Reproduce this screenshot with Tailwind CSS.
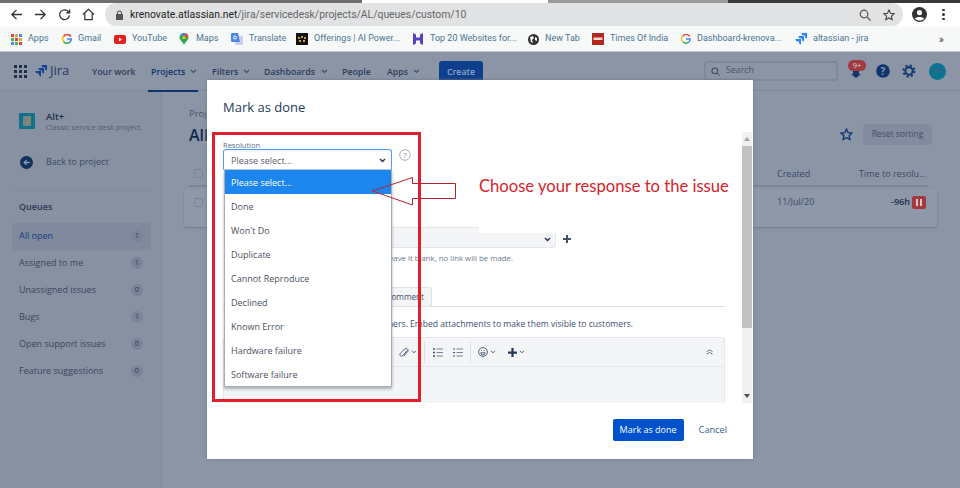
<!DOCTYPE html>
<html lang="en">
<head>
<meta charset="UTF-8">
<title>Mark as done - Jira</title>
<script src="https://cdn.jsdelivr.net/npm/@tailwindcss/browser@4"></script>
</head>
<body class="relative w-[960px] h-[488px] overflow-hidden bg-[#8b95a6] font-['Open_Sans',sans-serif]">

<!-- window strip -->
<div class="flex h-[3px] bg-white">
  <div class="w-[362px] bg-[#6f6f6f]"></div>
  <div class="w-[186px]"></div>
  <div class="w-[180px] bg-[#9a9a9a]"></div>
  <div class="flex-1 bg-[#3a3a3a]"></div>
</div>

<!-- browser toolbar -->
<div class="flex items-center h-[23px] bg-white font-['Roboto',sans-serif]">
  <svg class="ml-[10px] w-[13px] h-[13px]" viewBox="0 0 14 14" fill="none" stroke="#333" stroke-width="1.4"><path d="M13 7H2M7 2L2 7l5 5"/></svg>
  <svg class="ml-[11px] w-[13px] h-[13px]" viewBox="0 0 14 14" fill="none" stroke="#333" stroke-width="1.4"><path d="M1 7h11M7 2l5 5-5 5"/></svg>
  <svg class="ml-[11px] w-[13px] h-[13px]" viewBox="0 0 14 14" fill="none" stroke="#333" stroke-width="1.4"><path d="M11.6 4.5A5.3 5.3 0 1 0 12.3 8M12.5 1.5v3.6H9"/></svg>
  <svg class="ml-[11px] w-[13px] h-[13px]" viewBox="0 0 14 14" fill="none" stroke="#333" stroke-width="1.3"><path d="M1 7l6-5.5L13 7M3 6v6.500h8V6"/></svg>
  <div class="ml-[10px] flex items-center w-[798px] h-[23px] rounded-full bg-[#e1e2e3] pl-[10px] pr-[8px]">
    <svg class="w-[9px] h-[10px]" viewBox="0 0 9 10" fill="#555"><path d="M2 4V3a2.500 2.500 0 0 1 5 0v1h1v6H1V4zm1 0h3V3a1.500 1.500 0 0 0-3 0z"/></svg>
    <span class="ml-[6px] text-[10.400px] whitespace-nowrap text-[#222]">krenovate.atlassian.net<span class="text-[#666]">/jira/servicedesk/projects/AL/queues/custom/10</span></span>
    <svg class="ml-auto w-[12px] h-[12px]" viewBox="0 0 12 12" fill="none" stroke="#555" stroke-width="1.200"><circle cx="5" cy="5" r="3.800"/><path d="M8 8l3.500 3.500"/></svg>
    <svg class="ml-[12px] w-[12px] h-[12px]" viewBox="0 0 12 12" fill="none" stroke="#444" stroke-width="1.100"><path d="M6 1l1.500 3.300 3.600.4-2.700 2.400.8 3.600L6 8.900l-3.200 1.800.8-3.600L.9 4.700l3.600-.4z"/></svg>
  </div>
  <svg class="ml-[9px] w-[15px] h-[15px]" viewBox="0 0 16 16"><circle cx="8" cy="8" r="8" fill="#333"/><circle cx="8" cy="6" r="2.700" fill="#fff"/><path d="M3 12.500c1-2.500 9-2.500 10 0-2 2.500-8 2.500-10 0" fill="#fff"/></svg>
  <div class="ml-[15px] flex flex-col gap-[2px]"><i class="block w-[2.500px] h-[2.500px] rounded-full bg-[#333]"></i><i class="block w-[2.500px] h-[2.500px] rounded-full bg-[#333]"></i><i class="block w-[2.500px] h-[2.500px] rounded-full bg-[#333]"></i></div>
</div>

<!-- bookmarks bar -->
<div class="flex items-center h-[26px] pt-[1px] pl-[11px] bg-[#f7f8f8] border-b border-[#c9cccf] text-[9px] text-[#4a7590] font-['Roboto',sans-serif] whitespace-nowrap">
  <div class="flex items-center w-[51px] shrink-0">
    <svg class="w-[11px] h-[11px]" viewBox="0 0 11 11"><rect width="3" height="3" fill="#d9483b"/><rect x="4" width="3" height="3" fill="#e8a33d"/><rect x="8" width="3" height="3" fill="#4a8af4"/><rect y="4" width="3" height="3" fill="#4caf50"/><rect x="4" y="4" width="3" height="3" fill="#d9483b"/><rect x="8" y="4" width="3" height="3" fill="#e8a33d"/><rect y="8" width="3" height="3" fill="#4a8af4"/><rect x="4" y="8" width="3" height="3" fill="#4caf50"/><rect x="8" y="8" width="3" height="3" fill="#d9483b"/></svg>
    <span class="ml-[6px]">Apps</span>
  </div>
  <div class="flex items-center w-[52px] shrink-0">
    <svg class="w-[10px] h-[10px]" viewBox="0 0 12 12" fill="none" stroke-width="2"><path d="M10.500 3A5 5 0 0 0 2 2.800" stroke="#ea4335"/><path d="M2 2.800a5 5 0 0 0 0 6.400" stroke="#fbbc05"/><path d="M2 9.200a5 5 0 0 0 7.500.4" stroke="#34a853"/><path d="M9.500 9.600A4.500 4.500 0 0 0 11 6H6" stroke="#4285f4"/></svg>
    <span class="ml-[6px]">Gmail</span>
  </div>
  <div class="flex items-center w-[65px] shrink-0">
    <svg class="w-[12px] h-[9px]" viewBox="0 0 12 9"><rect width="12" height="9" rx="2" fill="#e5201d"/><path d="M5 2.500v4L8 4.500z" fill="#fff"/></svg>
    <span class="ml-[6px]">YouTube</span>
  </div>
  <div class="flex items-center w-[52px] shrink-0">
    <svg class="w-[10px] h-[12px]" viewBox="0 0 10 12"><path d="M5 0a4.500 4.500 0 0 1 4.500 4.500C9.500 7 6.500 8.500 5 12 3.500 8.500.5 7 .5 4.500A4.500 4.500 0 0 1 5 0" fill="#34a853"/><path d="M1 3a4.500 4.500 0 0 1 4-3l1 3z" fill="#4285f4"/><path d="M6 0a4.500 4.500 0 0 1 3.400 3.500L6 4.500z" fill="#ea4335"/><circle cx="5" cy="4.500" r="1.600" fill="#fbbc05"/></svg>
    <span class="ml-[7px]">Maps</span>
  </div>
  <div class="flex items-center w-[65px] shrink-0">
    <svg class="w-[12px] h-[12px]" viewBox="0 0 12 12"><rect x="4" y="3" width="8" height="9" rx="1" fill="#c6d3ea"/><path d="M1 0h6l2 9H1a1 1 0 0 1-1-1V1a1 1 0 0 1 1-1" fill="#4a86e8"/><circle cx="4" cy="4.500" r="1.500" fill="none" stroke="#fff"/></svg>
    <span class="ml-[6px]">Translate</span>
  </div>
  <div class="flex items-center w-[116px] shrink-0">
    <svg class="w-[12px] h-[12px]" viewBox="0 0 12 12"><rect width="12" height="12" fill="#111"/><path d="M2 4h2v2H2zm3-1h2v2H5zm3 1h2v2H8zM3 7h2v2H3zm4 0h2v2H7z" fill="#c9a227"/></svg>
    <span class="ml-[6px]">Offerings | AI Power...</span>
  </div>
  <div class="flex items-center w-[116px] shrink-0">
    <svg class="w-[12px] h-[12px]" viewBox="0 0 12 12"><path d="M1 0l3 1.500v9L1 12zm10 0L8 1.500v9l3 1.500zM4 4.500h4v3H4z" fill="#5a3fc0"/></svg>
    <span class="ml-[6px]">Top 20 Websites for...</span>
  </div>
  <div class="flex items-center w-[64px] shrink-0">
    <svg class="w-[11px] h-[11px]" viewBox="0 0 11 11"><circle cx="5.500" cy="5.500" r="5.500" fill="#333"/><path d="M2 3l3-1 1 2-2 2 1 3-2-1zm5 0l2 1v3L7 6z" fill="#f7f8f8"/></svg>
    <span class="ml-[6px]">New Tab</span>
  </div>
  <div class="flex items-center w-[89px] shrink-0">
    <svg class="w-[12px] h-[12px]" viewBox="0 0 12 12"><rect width="12" height="12" fill="#b3261e"/><rect x="1.500" y="4.500" width="9" height="2.500" fill="#f3d6d3"/></svg>
    <span class="ml-[6px]">Times Of India</span>
  </div>
  <div class="flex items-center w-[114px] shrink-0">
    <svg class="w-[10px] h-[10px]" viewBox="0 0 12 12" fill="none" stroke-width="1.600"><path d="M10.500 3A5 5 0 0 0 2 2.800" stroke="#ea4335"/><path d="M2 2.800a5 5 0 0 0 0 6.400" stroke="#fbbc05"/><path d="M2 9.200a5 5 0 0 0 7.500.4" stroke="#34a853"/><path d="M9.500 9.600A4.500 4.500 0 0 0 11 6H6" stroke="#4285f4"/></svg>
    <span class="ml-[6px]">Dashboard-krenova...</span>
  </div>
  <div class="flex items-center w-[144px] shrink-0">
    <svg class="w-[12px] h-[12px]" viewBox="0 0 12 12" fill="#2684ff"><path d="M12 0H6.500a2.500 2.500 0 0 0 2.500 2.500h1v1A2 2 0 0 0 12 5.500zM9 3H3.500a2.500 2.500 0 0 0 2.500 2.500h1v1A2 2 0 0 0 9 8.500zM6 6H.5A2.500 2.500 0 0 0 3 8.500h1v1A2 2 0 0 0 6 11.500z"/></svg>
    <span class="ml-[6px]">altassian - jira</span>
  </div>
  <span class="text-[#333] text-[10px]">»</span>
</div>

<!-- jira nav -->
<div class="flex items-center h-[39px] pl-[14px] text-[8.800px] font-semibold text-[#2c3e5d] border-b border-[#7f899b]">
  <div class="grid grid-cols-3 gap-[2px] w-[13px]">
    <i class="block w-[3px] h-[3px] bg-[#1f2f4d]"></i><i class="block w-[3px] h-[3px] bg-[#1f2f4d]"></i><i class="block w-[3px] h-[3px] bg-[#1f2f4d]"></i>
    <i class="block w-[3px] h-[3px] bg-[#1f2f4d]"></i><i class="block w-[3px] h-[3px] bg-[#1f2f4d]"></i><i class="block w-[3px] h-[3px] bg-[#1f2f4d]"></i>
    <i class="block w-[3px] h-[3px] bg-[#1f2f4d]"></i><i class="block w-[3px] h-[3px] bg-[#1f2f4d]"></i><i class="block w-[3px] h-[3px] bg-[#1f2f4d]"></i>
  </div>
  <svg class="ml-[8px] w-[12px] h-[12px]" viewBox="0 0 12 12" fill="#10438f"><path d="M12 0H6.500a2.500 2.500 0 0 0 2.500 2.500h1v1A2 2 0 0 0 12 5.500zM9 3H3.500a2.500 2.500 0 0 0 2.500 2.500h1v1A2 2 0 0 0 9 8.500zM6 6H.5A2.500 2.500 0 0 0 3 8.500h1v1A2 2 0 0 0 6 11.500z"/></svg>
  <span class="ml-[3px] w-[23px] text-[13px] font-normal text-[#1f3a68]">Jira</span>
  <span class="ml-[19px] w-[59px] pt-[3px]">Your work</span>
  <div class="relative flex items-center justify-between w-[47px] h-[39px] text-[#10346e]">
    <span class="pt-[3px]">Projects</span>
    <svg class="w-[7px] h-[5px] mr-[1px]" viewBox="0 0 7 5" fill="none" stroke="#3e4f6d" stroke-width="1.200"><path d="M1 1l2.500 2.500L6 1"/></svg>
    <div class="absolute left-[-3px] bottom-[-1px] w-[50px] h-[2px] bg-[#10346e]"></div>
  </div>
  <div class="ml-[14px] flex items-center justify-between w-[38px]"><span class="pt-[3px]">Filters</span><svg class="w-[7px] h-[5px]" viewBox="0 0 7 5" fill="none" stroke="#3e4f6d" stroke-width="1.200"><path d="M1 1l2.500 2.500L6 1"/></svg></div>
  <div class="ml-[14px] flex items-center justify-between w-[64px]"><span class="pt-[3px]">Dashboards</span><svg class="w-[7px] h-[5px]" viewBox="0 0 7 5" fill="none" stroke="#3e4f6d" stroke-width="1.200"><path d="M1 1l2.500 2.500L6 1"/></svg></div>
  <span class="ml-[14px] w-[45px] pt-[3px]">People</span>
  <div class="flex items-center justify-between w-[33px]"><span class="pt-[3px]">Apps</span><svg class="w-[7px] h-[5px]" viewBox="0 0 7 5" fill="none" stroke="#3e4f6d" stroke-width="1.200"><path d="M1 1l2.500 2.500L6 1"/></svg></div>
  <div class="ml-[19px] mt-[2px] flex items-center justify-center w-[44px] h-[22px] pt-[1px] rounded-t-[3px] bg-[#0e3f8c] text-[#8fa5c8]">Create</div>
  <div class="ml-[221px] flex items-center w-[134px] h-[20px] rounded-[3px] border-2 border-[#7f899b] bg-[#8b95a6] pl-[5px] font-normal text-[#46546f]">
    <svg class="w-[9px] h-[9px]" viewBox="0 0 10 10" fill="none" stroke="#2c3e5d" stroke-width="1.100"><circle cx="4.300" cy="4.300" r="3.300"/><path d="M7 7l2.500 2.500"/></svg>
    <span class="ml-[6px]">Search</span>
  </div>
  <div class="relative ml-[11px] w-[14px] h-[16px]">
    <svg class="absolute left-[2px] top-[6px] w-[10px] h-[9px]" viewBox="0 0 10 9" fill="#10346e"><path d="M0 5h10L5 9z"/><path d="M2 5V1h6v4z"/></svg>
    <div class="absolute left-[-1px] top-[-3px] flex items-center justify-center w-[18px] h-[11px] rounded-full bg-[#a33a3d] text-[7.500px] font-normal text-[#cfd6e0]">9+</div>
  </div>
  <svg class="ml-[13px] w-[14px] h-[14px]" viewBox="0 0 14 14"><circle cx="7" cy="7" r="6.800" fill="#10346e"/><text x="7" y="10.500" text-anchor="middle" font-size="10" font-weight="700" fill="#8b95a6" font-family="Open Sans">?</text></svg>
  <svg class="ml-[12px] w-[14px] h-[14px]" viewBox="0 0 14 14" fill="none" stroke="#10346e"><circle cx="7" cy="7" r="3.700" stroke-width="2"/><circle cx="7" cy="7" r="5.600" stroke-width="1.800" stroke-dasharray="2.200 2.200"/></svg>
  <div class="ml-[13px] flex items-center justify-center w-[17px] h-[17px] rounded-full bg-[#0b7591] text-[6.500px] font-normal text-[#4a5f7e]">MK</div>
</div>

<!-- page behind the dialog -->
<div class="flex h-[397px]">
  <aside class="w-[162px] shrink-0 border-r border-[#7f899b] bg-[#8791a2] pl-[12px] pr-[10px]">
    <div class="flex items-center h-[30px] mt-[15px] pl-[7px]">
      <svg class="w-[16px] h-[16px]" viewBox="0 0 16 16"><rect width="16" height="16" rx="1" fill="#13708b"/><rect x="4" y="3" width="8" height="10" fill="#76828e"/><path d="M10 5l2-1-3 7-2 1z" fill="#a08a30"/></svg>
      <div class="ml-[11px]">
        <div class="text-[9.500px] leading-[11px] font-semibold text-[#1f2f4d]">Alt+</div>
        <div class="text-[7.500px] leading-[10px] whitespace-nowrap text-[#4e5c76]">Classic service desk project</div>
      </div>
    </div>
    <div class="flex items-center h-[30px] mt-[11px] pl-[8px] text-[9px] text-[#3a4a66]">
      <svg class="w-[13px] h-[13px]" viewBox="0 0 14 14"><circle cx="7" cy="7" r="7" fill="#13315f"/><path d="M10.500 7h-6M7 4.500L4.500 7 7 9.500" fill="none" stroke="#8b95a6" stroke-width="1.500"/></svg>
      <span class="ml-[13px]">Back to project</span>
    </div>
    <div class="mt-[13px] h-px bg-[#7f899b]"></div>
    <div class="mt-[9px] pl-[7px] text-[9px] font-semibold text-[#2c3a55]">Queues</div>
    <div class="mt-[9px] flex items-center justify-between h-[27px] rounded-[3px] bg-[#808a9c] pl-[7px] pr-[8px] text-[9px] text-[#133a85]">All open <b class="flex items-center justify-center w-[12px] h-[12px] rounded-full bg-[#79839a] text-[7.500px] font-normal text-[#2c3a55]">1</b></div>
    <div class="flex items-center justify-between h-[27px] pl-[7px] pr-[8px] text-[9px] text-[#39465f]">Assigned to me <b class="flex items-center justify-center w-[12px] h-[12px] rounded-full bg-[#79839a] text-[7.500px] font-normal text-[#2c3a55]">1</b></div>
    <div class="flex items-center justify-between h-[27px] pl-[7px] pr-[8px] text-[9px] text-[#39465f]">Unassigned issues <b class="flex items-center justify-center w-[12px] h-[12px] rounded-full bg-[#79839a] text-[7.500px] font-normal text-[#2c3a55]">0</b></div>
    <div class="flex items-center justify-between h-[27px] pl-[7px] pr-[8px] text-[9px] text-[#39465f]">Bugs <b class="flex items-center justify-center w-[12px] h-[12px] rounded-full bg-[#79839a] text-[7.500px] font-normal text-[#2c3a55]">1</b></div>
    <div class="flex items-center justify-between h-[27px] pl-[7px] pr-[8px] text-[9px] text-[#39465f]">Open support issues <b class="flex items-center justify-center w-[12px] h-[12px] rounded-full bg-[#79839a] text-[7.500px] font-normal text-[#2c3a55]">0</b></div>
    <div class="flex items-center justify-between h-[27px] pl-[7px] pr-[8px] text-[9px] text-[#39465f]">Feature suggestions <b class="flex items-center justify-center w-[12px] h-[12px] rounded-full bg-[#79839a] text-[7.500px] font-normal text-[#2c3a55]">0</b></div>
  </aside>
  <main class="flex-1 pl-[22px] pr-[23px]">
    <div class="flex justify-between h-[71px] pl-[5px]">
      <div class="pt-[17px]">
        <div class="text-[9.500px] leading-[12px] text-[#46546f]">Proj</div>
        <div class="mt-[4px] text-[16px] leading-[22px] font-semibold text-[#132a50]">All</div>
      </div>
      <div class="flex items-center mr-[5px] mt-[33px] h-[21px]">
        <svg class="w-[13px] h-[13px]" viewBox="0 0 12 12" fill="none" stroke="#10346e" stroke-width="1.200"><path d="M6 1l1.500 3.300 3.600.4-2.700 2.400.8 3.600L6 8.900l-3.200 1.800.8-3.600L.9 4.700l3.600-.4z"/></svg>
        <div class="ml-[10px] flex items-center justify-center w-[69px] h-[21px] rounded-[3px] bg-[#828c9e] text-[8.500px] text-[#3e4c68]">Reset sorting</div>
      </div>
    </div>
    <div class="flex items-center h-[25px] ml-[5px] mr-[9px] border-b-2 border-[#7b8598] text-[9px] text-[#3a4a66]">
      <i class="block ml-[5px] w-[9px] h-[9px] rounded-[2px] border border-[#7b8598]"></i>
      <span class="ml-[574px] w-[82px]">Created</span>
      <span class="whitespace-nowrap">Time to resolu...</span>
    </div>
    <div class="flex items-start h-[38px] mt-[2px] rounded-[3px] bg-[#8e98a9] shadow-[0_1px_2px_#6f7989] text-[9px] text-[#3a4a66]">
      <i class="block ml-[10px] mt-[9px] w-[9px] h-[9px] rounded-[2px] border border-[#7b8598]"></i>
      <span class="ml-[574px] mt-[6px] w-[114px]">11/Jul/20</span>
      <span class="mt-[6px] font-semibold text-[#1f2f4d]">-96h</span>
      <span class="ml-[2px] mt-[7px] flex items-center justify-center gap-[2px] w-[14px] h-[13px] rounded-[2px] bg-[#a33a3d]"><i class="block w-[2px] h-[7px] bg-[#d3c8cc]"></i><i class="block w-[2px] h-[7px] bg-[#d3c8cc]"></i></span>
    </div>
  </main>
</div>

<!-- dialog -->
<div class="absolute left-[207px] top-[80px] flex flex-col w-[546px] h-[379px] bg-white shadow-[0_0_3px_#6f7989]">
  <div class="h-[52px] pl-[16px] pt-[18px] text-[13px] leading-[18px] text-[#253858]">Mark as done</div>
  <div class="flex h-[271px] overflow-hidden">
    <div class="relative w-[535px]">
      <!-- rows covered by the open dropdown -->
      <div class="absolute left-[173px] right-[186px] top-[95px] h-[21px] rounded-[3px] border border-[#e4e6ea] bg-[#f4f5f7]"></div>
      <div class="absolute left-[272px] top-[88px] w-[90px] h-[13px] bg-white"></div>
      <div class="absolute left-[337px] top-[103px] flex items-center gap-[12px]">
        <svg class="w-[7px] h-[5px]" viewBox="0 0 7 5" fill="none" stroke="#253858" stroke-width="1.500"><path d="M1 1l2.500 2.500L6 1"/></svg>
        <svg class="w-[8px] h-[8px]" viewBox="0 0 8 8" fill="#42526e"><path d="M3 0h2v3h3v2H5v3H3V5H0V3h3z"/></svg>
      </div>
      <div class="absolute right-[229px] top-[120px] text-[7.800px] leading-[12px] text-[#6b778c] whitespace-nowrap">leave it blank, no link will be made.</div>
      <div class="absolute left-[150px] top-[155px] flex items-center justify-end w-[75px] h-[20px] rounded-t-[3px] border border-b-0 border-[#dfe1e6] bg-[#f4f5f7] pr-[7px] text-[8.200px] text-[#42526e]">Comment</div>
      <div class="absolute left-[16px] right-[17px] top-[174px] h-px bg-[#dfe1e6]"></div>
      <div class="absolute right-[109px] top-[186px] text-[8.600px] leading-[13px] text-[#42526e] whitespace-nowrap">customers. Embed attachments to make them visible to customers.</div>
      <div class="absolute left-[16px] right-[17px] top-[205px] h-[66px] rounded-t-[3px] border border-b-0 border-[#e4e6ea] bg-[#f4f5f7]">
        <div class="flex items-center h-[29px] border-b border-[#e4e6ea] pl-[174px] pr-[11px]">
          <svg class="w-[11px] h-[11px]" viewBox="0 0 12 12" fill="none" stroke="#42526e" stroke-width="1"><path d="M10 4L5 9.500a1.700 1.700 0 0 1-2.500-2.400L8 1.500a2.500 2.500 0 0 1 3 3L6 10"/></svg>
          <svg class="ml-[2px] w-[6px] h-[4px]" viewBox="0 0 7 5" fill="none" stroke="#42526e" stroke-width="1.200"><path d="M1 1l2.500 2.500L6 1"/></svg>
          <div class="ml-[7px] h-[22px] w-px bg-[#dfe1e6]"></div>
          <svg class="ml-[8px] w-[10px] h-[9px]" viewBox="0 0 10 9" stroke="#42526e"><path d="M0 1h2M0 4.500h2M0 8h2" stroke-width="1.500"/><path d="M3.500 1H10M3.500 4.500H10M3.500 8H10" stroke-width=".7"/></svg>
          <svg class="ml-[10px] w-[10px] h-[9px]" viewBox="0 0 10 9" stroke="#42526e"><path d="M0 1h2M0 4.500h2M0 8h2" stroke-width="1"/><path d="M3.500 1H10M3.500 4.500H10M3.500 8H10" stroke-width=".7"/></svg>
          <div class="ml-[7px] h-[22px] w-px bg-[#dfe1e6]"></div>
          <svg class="ml-[7px] w-[10px] h-[10px]" viewBox="0 0 10 10" fill="none" stroke="#42526e" stroke-width=".9"><circle cx="5" cy="5" r="4.400"/><path d="M2.800 5.800h4.400a2.200 2.200 0 0 1-4.400 0M3.200 3.600h1M5.800 3.600h1"/></svg>
          <svg class="ml-[2px] w-[6px] h-[4px]" viewBox="0 0 7 5" fill="none" stroke="#42526e" stroke-width="1.200"><path d="M1 1l2.500 2.500L6 1"/></svg>
          <svg class="ml-[12px] w-[9px] h-[9px]" viewBox="0 0 8 8" fill="#253858"><path d="M3 0h2v3h3v2H5v3H3V5H0V3h3z"/></svg>
          <svg class="ml-[2px] w-[6px] h-[4px]" viewBox="0 0 7 5" fill="none" stroke="#42526e" stroke-width="1.200"><path d="M1 1l2.500 2.500L6 1"/></svg>
          <svg class="ml-auto w-[7px] h-[6px]" viewBox="0 0 7 6" fill="none" stroke="#6b778c"><path d="M.5 2.500L3.500 1l3 1.500M.5 5L3.500 3.500l3 1.500"/></svg>
        </div>
      </div>
      <!-- resolution select -->
      <div class="absolute left-[16px] top-[8px] text-[7.500px] leading-[10px] text-[#5e6c84]">Resolution</div>
      <div class="absolute left-[16px] top-[17px] flex items-center justify-between w-[169px] h-[21px] pt-[2px] rounded-t-[3px] border border-[#4c9aff] border-b-[#c1c7d0] pl-[7px] pr-[5px] text-[9px] text-[#5a6070]">
        <span>Please select...</span>
        <svg class="w-[7px] h-[5px]" viewBox="0 0 7 5" fill="none" stroke="#253858" stroke-width="1.500"><path d="M1 1l2.500 2.500L6 1"/></svg>
      </div>
      <svg class="absolute left-[192px] top-[17px] w-[12px] h-[12px]" viewBox="0 0 12 12"><circle cx="6" cy="6" r="5.300" fill="none" stroke="#a5adba"/><text x="6" y="9" text-anchor="middle" font-size="8" fill="#8993a4" font-family="Open Sans">?</text></svg>
      <!-- open dropdown -->
      <div class="absolute left-[17px] top-[38px] w-[168px] bg-white border border-t-0 border-[#a5adba] shadow-[0_2px_3px_rgba(0,0,0,0.3)] text-[9px] text-[#4a5160]">
        <div class="flex items-center h-[24px] pt-[2px] pl-[6px] bg-[#1c86ee] text-white">Please select...</div>
        <div class="flex items-center h-[24px] pt-[2px] pl-[6px]">Done</div>
        <div class="flex items-center h-[24px] pt-[2px] pl-[6px]">Won't Do</div>
        <div class="flex items-center h-[24px] pt-[2px] pl-[6px]">Duplicate</div>
        <div class="flex items-center h-[24px] pt-[2px] pl-[6px]">Cannot Reproduce</div>
        <div class="flex items-center h-[24px] pt-[2px] pl-[6px]">Declined</div>
        <div class="flex items-center h-[24px] pt-[2px] pl-[6px]">Known Error</div>
        <div class="flex items-center h-[24px] pt-[2px] pl-[6px]">Hardware failure</div>
        <div class="flex items-center h-[24px] pt-[2px] pl-[6px]">Software failure</div>
      </div>
    </div>
    <!-- scrollbar -->
    <div class="flex flex-col w-[10px] bg-[#f1f1f1]">
      <div class="flex items-center justify-center h-[14px]"><i class="block border-x-[3px] border-x-transparent border-b-[4px] border-b-[#a3a3a3]"></i></div>
      <div class="h-[182px] bg-[#c1c1c1]"></div>
      <div class="flex items-center justify-center h-[14px] mt-auto"><i class="block border-x-[3px] border-x-transparent border-t-[4px] border-t-[#505050]"></i></div>
    </div>
  </div>
  <div class="flex items-center justify-end h-[56px] pb-[2px] pr-[26px]">
    <div class="flex items-center justify-center w-[71px] h-[22px] rounded-[2px] bg-[#0052cc] text-[9px] text-white">Mark as done</div>
    <span class="ml-[15px] text-[9.200px] text-[#2f5f94]">Cancel</span>
  </div>
</div>

<!-- screenshot annotations -->
<div class="absolute left-[212px] top-[132px] w-[209px] h-[270px] border-[3px] border-[#e01f2d]"></div>
<svg class="absolute left-[370px] top-[175px] w-[88px] h-[32px]" viewBox="0 0 88 32" fill="none" stroke="#b5232f"><path d="M2.500 16L42.500 2.500V8.500H85.500V23.500H42.500V30z"/></svg>
<div class="absolute left-[479px] top-[175px] text-[16.600px] leading-[22px] text-[#d6232c] whitespace-nowrap font-['Lato',sans-serif]">Choose your response to the issue</div>

</body>
</html>
